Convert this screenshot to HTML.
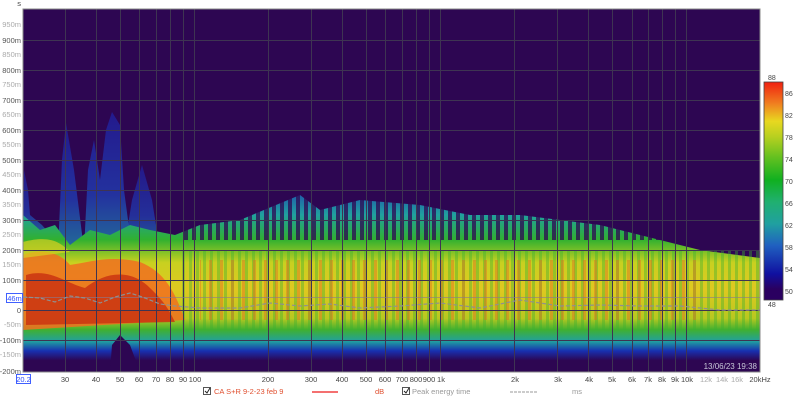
<!DOCTYPE html>
<html><head><meta charset="utf-8"><style>
html,body{margin:0;padding:0;background:#fff;width:800px;height:402px;overflow:hidden}
svg{display:block}
text{font-family:"Liberation Sans",sans-serif}
</style></head><body>
<svg width="800" height="402" viewBox="0 0 800 402" xmlns="http://www.w3.org/2000/svg">
<defs>
<pattern id="st" width="7" height="10" patternUnits="userSpaceOnUse">
<rect x="0" y="0" width="3" height="10" fill="#3cb030"/>
</pattern>
<pattern id="st3" width="11" height="10" patternUnits="userSpaceOnUse">
<rect x="0" y="0" width="3" height="10" fill="#e07020"/>
</pattern>
<pattern id="st2" width="8" height="10" patternUnits="userSpaceOnUse">
<rect x="0" y="0" width="4" height="10" fill="#2d0652"/>
</pattern>
<linearGradient id="cb" x1="0" y1="1" x2="0" y2="0">
<stop offset="0" stop-color="#2a0060"/>
<stop offset="0.05" stop-color="#2a0060"/>
<stop offset="0.12" stop-color="#1010a0"/>
<stop offset="0.25" stop-color="#2060c0"/>
<stop offset="0.35" stop-color="#20a0a0"/>
<stop offset="0.45" stop-color="#20b070"/>
<stop offset="0.55" stop-color="#10b020"/>
<stop offset="0.65" stop-color="#60c020"/>
<stop offset="0.75" stop-color="#b8d020"/>
<stop offset="0.82" stop-color="#e8d820"/>
<stop offset="0.9" stop-color="#f08020"/>
<stop offset="1" stop-color="#f02010"/>
</linearGradient>
<linearGradient id="body" gradientUnits="userSpaceOnUse" x1="0" y1="180" x2="0" y2="372">
<stop offset="0" stop-color="#2030b0"/>
<stop offset="0.18" stop-color="#20a0a0"/>
<stop offset="0.31" stop-color="#30b030"/>
<stop offset="0.43" stop-color="#c8d020"/>
<stop offset="0.57" stop-color="#e0c820"/>
<stop offset="0.72" stop-color="#b8c820"/>
<stop offset="0.78" stop-color="#40b030"/>
<stop offset="0.84" stop-color="#20a0a0"/>
<stop offset="0.89" stop-color="#1830b0"/>
<stop offset="0.94" stop-color="#2d0652"/>
<stop offset="1" stop-color="#2d0652"/>
</linearGradient>
<linearGradient id="spk" x1="0" y1="0" x2="0" y2="1">
<stop offset="0" stop-color="#2020a0"/>
<stop offset="0.6" stop-color="#2040b8"/>
<stop offset="1" stop-color="#2090b0"/>
</linearGradient>
<clipPath id="plot"><rect x="23" y="9" width="737" height="363"/></clipPath>
</defs>
<rect x="23" y="9" width="737" height="363" fill="#2d0652"/>
<g clip-path="url(#plot)">
<!-- low freq blue spikes -->
<path d="M58,250 L62,160 L66,123 L74,170 L84,250 Z" fill="url(#spk)" opacity="0.75"/>
<path d="M84,250 L88,170 L94,140 L100,180 L106,130 L112,112 L120,125 L124,190 L132,250 Z" fill="url(#spk)" opacity="0.75"/>
<path d="M23,240 L24,170 L28,190 L30,215 L42,225 L55,240 Z" fill="url(#spk)" opacity="0.7"/>
<path d="M124,250 L132,200 L142,165 L152,200 L160,250 Z" fill="url(#spk)" opacity="0.7"/>
<!-- main body -->
<path d="M23,215 L40,230 L55,225 L70,245 L90,230 L110,235 L130,225 L150,230 L175,235 L200,225 L240,220 L300,195 L320,210 L360,200 L420,205 L470,215 L520,215 L600,225 L640,235 L700,250 L760,258 L760,372 L23,372 Z" fill="url(#body)"/>
<!-- stripes -->
<rect x="180" y="250" width="580" height="80" fill="url(#st)" opacity="0.4"/>
<rect x="200" y="260" width="500" height="60" fill="url(#st3)" opacity="0.45"/>
<rect x="180" y="185" width="580" height="55" fill="url(#st2)" opacity="0.75"/>
<!-- low freq red/orange -->
<path d="M23,255 C40,248 60,252 70,265 C90,262 110,255 140,262 C165,272 175,292 185,320 L23,330 Z" fill="#f07020" opacity="0.85"/>
<path d="M26,275 C50,268 65,283 85,288 C105,272 130,268 150,288 C165,302 170,312 175,322 L26,325 Z" fill="#c83010" opacity="0.8"/>
<path d="M23,242 C50,235 60,242 70,252 L23,258 Z" fill="#d8d020" opacity="0.7"/>
<!-- bottom -->
<path d="M110,372 L112,345 L120,335 L130,345 L140,372 Z" fill="#2d0652"/>
<!-- grid -->
<g stroke="#3e3452" stroke-width="1">
<line x1="23" x2="760" y1="40.5" y2="40.5"/><line x1="23" x2="760" y1="70.5" y2="70.5"/><line x1="23" x2="760" y1="100.5" y2="100.5"/><line x1="23" x2="760" y1="130.5" y2="130.5"/><line x1="23" x2="760" y1="160.5" y2="160.5"/><line x1="23" x2="760" y1="190.5" y2="190.5"/><line x1="23" x2="760" y1="220.5" y2="220.5"/><line x1="23" x2="760" y1="250.5" y2="250.5"/><line x1="23" x2="760" y1="280.5" y2="280.5"/><line x1="23" x2="760" y1="310.5" y2="310.5"/><line x1="23" x2="760" y1="340.5" y2="340.5"/>
<line x1="65.5" x2="65.5" y1="9" y2="372"/><line x1="96.5" x2="96.5" y1="9" y2="372"/><line x1="120.5" x2="120.5" y1="9" y2="372"/><line x1="139.5" x2="139.5" y1="9" y2="372"/><line x1="156.5" x2="156.5" y1="9" y2="372"/><line x1="170.5" x2="170.5" y1="9" y2="372"/><line x1="183.5" x2="183.5" y1="9" y2="372"/><line x1="194.5" x2="194.5" y1="9" y2="372"/><line x1="268.5" x2="268.5" y1="9" y2="372"/><line x1="311.5" x2="311.5" y1="9" y2="372"/><line x1="342.5" x2="342.5" y1="9" y2="372"/><line x1="366.5" x2="366.5" y1="9" y2="372"/><line x1="385.5" x2="385.5" y1="9" y2="372"/><line x1="402.5" x2="402.5" y1="9" y2="372"/><line x1="416.5" x2="416.5" y1="9" y2="372"/><line x1="429.5" x2="429.5" y1="9" y2="372"/><line x1="440.5" x2="440.5" y1="9" y2="372"/><line x1="514.5" x2="514.5" y1="9" y2="372"/><line x1="557.5" x2="557.5" y1="9" y2="372"/><line x1="588.5" x2="588.5" y1="9" y2="372"/><line x1="612.5" x2="612.5" y1="9" y2="372"/><line x1="632.5" x2="632.5" y1="9" y2="372"/><line x1="648.5" x2="648.5" y1="9" y2="372"/><line x1="662.5" x2="662.5" y1="9" y2="372"/><line x1="675.5" x2="675.5" y1="9" y2="372"/><line x1="686.5" x2="686.5" y1="9" y2="372"/>
</g>
<line x1="23" x2="760" y1="297.5" y2="297.5" stroke="#8a7a90" stroke-width="1" opacity="0.6"/>
<path d="M23,297 L40,298 L55,302 L70,296 L85,298 L100,303 L115,297 L130,293 L145,298 L160,304 L175,306 L200,308 L240,308 L270,303 L300,306 L330,304 L360,308 L400,306 L440,303 L480,308 L520,300 L560,306 L600,305 L640,306 L680,306 L720,310 L760,310" fill="none" stroke="#909090" stroke-width="1.2" stroke-dasharray="4,2"/>
<text x="757" y="369" font-size="8" fill="#c8c8d8" text-anchor="end">13/06/23 19:38</text>
</g>
<rect x="23" y="9" width="737" height="363" fill="none" stroke="#888" stroke-width="1"/>
<!-- y labels -->
<g font-size="7.5" text-anchor="end">
<text x="21" y="6" fill="#444">s</text>
<text x="21" y="27" fill="#aaa">950m</text><text x="21" y="43" fill="#555">900m</text>
<text x="21" y="57" fill="#aaa">850m</text><text x="21" y="73" fill="#555">800m</text>
<text x="21" y="87" fill="#aaa">750m</text><text x="21" y="103" fill="#555">700m</text>
<text x="21" y="117" fill="#aaa">650m</text><text x="21" y="133" fill="#555">600m</text>
<text x="21" y="147" fill="#aaa">550m</text><text x="21" y="163" fill="#555">500m</text>
<text x="21" y="177" fill="#aaa">450m</text><text x="21" y="193" fill="#555">400m</text>
<text x="21" y="207" fill="#aaa">350m</text><text x="21" y="223" fill="#555">300m</text>
<text x="21" y="237" fill="#aaa">250m</text><text x="21" y="253" fill="#555">200m</text>
<text x="21" y="267" fill="#aaa">150m</text><text x="21" y="283" fill="#555">100m</text>
<text x="21" y="313" fill="#555">0</text>
<text x="21" y="327" fill="#aaa">-50m</text><text x="21" y="343" fill="#555">-100m</text>
<text x="21" y="357" fill="#aaa">-150m</text><text x="21" y="374" fill="#555">-200m</text>
</g>
<rect x="6.5" y="293.5" width="16" height="9" fill="#fff" stroke="#4060ff"/>
<text x="14.5" y="301" font-size="7.5" fill="#3050ff" text-anchor="middle">46m</text>
<!-- x labels -->
<rect x="16.5" y="374.5" width="14" height="9" fill="#fff" stroke="#4060ff"/>
<g font-size="7.5" fill="#444" text-anchor="middle">
<text x="23.5" y="382" fill="#3050ff">20.2</text>
<text x="65" y="382">30</text><text x="96" y="382">40</text><text x="120" y="382">50</text><text x="139" y="382">60</text><text x="156" y="382">70</text><text x="170" y="382">80</text><text x="183" y="382">90</text><text x="195" y="382">100</text><text x="268" y="382">200</text><text x="311" y="382">300</text><text x="342" y="382">400</text><text x="366" y="382">500</text><text x="385" y="382">600</text><text x="402" y="382">700</text><text x="416" y="382">800</text><text x="429" y="382">900</text><text x="441" y="382">1k</text><text x="515" y="382">2k</text><text x="558" y="382">3k</text><text x="589" y="382">4k</text><text x="612" y="382">5k</text><text x="632" y="382">6k</text><text x="648" y="382">7k</text><text x="662" y="382">8k</text><text x="675" y="382">9k</text><text x="687" y="382">10k</text>
<text x="706" y="382" fill="#aaa">12k</text><text x="722" y="382" fill="#aaa">14k</text><text x="737" y="382" fill="#aaa">16k</text><text x="760" y="382">20kHz</text>
</g>
<!-- colorbar -->
<rect x="764" y="82" width="19" height="218" fill="url(#cb)" stroke="#444" stroke-width="0.8"/>
<g font-size="7" fill="#444">
<text x="768" y="80">88</text><text x="785" y="96">86</text><text x="785" y="118">82</text><text x="785" y="140">78</text><text x="785" y="162">74</text><text x="785" y="184">70</text><text x="785" y="206">66</text><text x="785" y="228">62</text><text x="785" y="250">58</text><text x="785" y="272">54</text><text x="785" y="294">50</text><text x="768" y="307">48</text>
</g>
<!-- legend -->
<rect x="203.5" y="387.5" width="7" height="7" fill="#fff" stroke="#555"/>
<path d="M205,391 L207,393 L210,388" stroke="#222" fill="none"/>
<text x="214" y="394" font-size="7.5" fill="#e05030">CA S+R 9-2-23 feb 9</text>
<line x1="312" x2="338" y1="392" y2="392" stroke="#f04040" stroke-width="1.5"/>
<text x="375" y="394" font-size="7.5" fill="#e05030">dB</text>
<rect x="402.5" y="387.5" width="7" height="7" fill="#fff" stroke="#555"/>
<path d="M404,391 L406,393 L409,388" stroke="#222" fill="none"/>
<text x="412" y="394" font-size="7.5" fill="#999">Peak energy time</text>
<line x1="510" x2="537" y1="392" y2="392" stroke="#999" stroke-width="1" stroke-dasharray="3,1"/>
<text x="572" y="394" font-size="7.5" fill="#999">ms</text>
</svg>
</body></html>
